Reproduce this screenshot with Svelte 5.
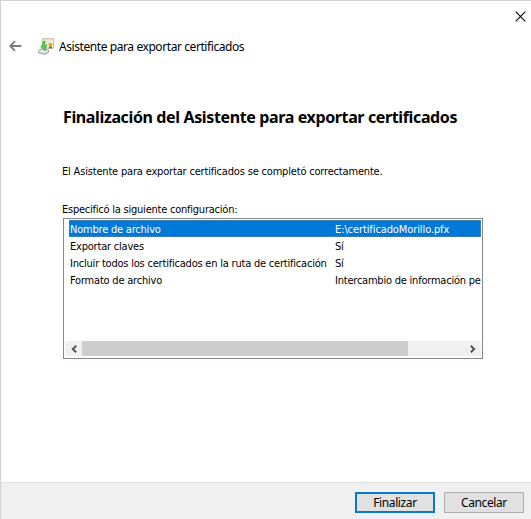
<script>
  const rows = [
    { name: 'Nombre de archivo', value: 'E:\\certificadoMorillo.pfx', selected: true },
    { name: 'Exportar claves', value: 'Sí' },
    { name: 'Incluir todos los certificados en la ruta de certificación', value: 'Sí' },
    { name: 'Formato de archivo', value: 'Intercambio de información pe' }
  ];
</script>

<main class="dialog">
  <div class="titlebar">
    <button class="close" aria-label="Cerrar">
      <svg width="11" height="11" viewBox="0 0 11 11"><path d="M.7.7l9.6 9.6M10.3.7L.7 10.3" stroke="#111" stroke-width="1.2" /></svg>
    </button>
  </div>
  <header>
    <svg class="back" width="13" height="12" viewBox="0 0 13 12"><path d="M12.3 6H1.4M6 1.2L1.2 6L6 10.8" fill="none" stroke="#7b7b7b" stroke-width="1.8" /></svg>
    <svg class="cert" width="17" height="17" viewBox="0 0 17 17">
      <path d="M4.5.8h11.2v9.3H4.5z" fill="#f7f0e5" stroke="#c8b796" />
      <path d="M7 3.2h6M9 5h4" stroke="#dcd4e2" />
      <path d="M11.2 7.5l-.6 3.4 1.8-.8 1.8.8-.5-3.4z" fill="#6869a0" />
      <circle cx="12.5" cy="6.8" r="2.1" fill="#dfaf28" />
      <path d="M.6 12.5l3.6-2 6.2 1.4v2.6l-3.6 1.9-6.2-1.5z" fill="#d5d9d9" stroke="#858b8b" stroke-width=".8" />
      <path d="M.8 12.8l5.8 1.3 3.7-2" fill="none" stroke="#f7f7f7" stroke-width=".8" />
      <path d="M2.6 8.6l1.8-1.1C4.2 5 5 3.7 6.5 2.7l1 1.5C6.7 5.2 6.6 6 6.8 7l2-.4-1.6 6z" fill="#55ca54" stroke="#36a63c" stroke-width=".6" />
    </svg>
    <span class="title">Asistente para exportar certificados</span>
  </header>
  <section>
    <h1>Finalización del Asistente para exportar certificados</h1>
    <p class="done">El Asistente para exportar certificados se completó correctamente.</p>
    <p class="label">Especificó la siguiente configuración:</p>
    <div class="list">
      <div class="rows">
        {#each rows as row}
          <div class="row" class:selected={row.selected}>
            <span class="name">{row.name}</span>
            <span class="value">{row.value}</span>
          </div>
        {/each}
      </div>
      <div class="scrollbar">
        <span class="arrow"><svg width="6" height="8" viewBox="0 0 6 8"><path d="M5.2.8L1.8 4l3.4 3.2" fill="none" stroke="#505050" stroke-width="1.9" /></svg></span>
        <div class="track"><div class="thumb"></div></div>
        <span class="arrow"><svg width="6" height="8" viewBox="0 0 6 8"><path d="M.8.8L4.2 4L.8 7.2" fill="none" stroke="#505050" stroke-width="1.9" /></svg></span>
      </div>
    </div>
  </section>
  <footer>
    <button class="btn primary">Finalizar</button>
    <button class="btn">Cancelar</button>
  </footer>
</main>

<style>
  :global(body) { background: #fff; overflow: hidden; }
  .dialog {
    width: 531px; height: 519px; box-sizing: border-box; overflow: hidden;
    display: flex; flex-direction: column; background: #fff; color: #000;
    border-top: 1px solid #d2d2d2; border-left: 1px solid #d2d2d2;
    font-family: "DejaVu Sans Condensed", "DejaVu Sans", sans-serif;
    font-stretch: condensed; font-size: 11px;
  }
  button { padding: 0; font: inherit; color: inherit; }
  svg { display: block; flex: none; }
  .titlebar { height: 30px; flex: none; display: flex; justify-content: flex-end; padding: 10px 5px 0 0; box-sizing: border-box; }
  .close { width: 11px; height: 11px; border: 0; background: none; }
  header { height: 30px; flex: none; display: flex; align-items: center; padding-left: 8px; font-family: "Noto Sans", sans-serif; font-stretch: normal; font-size: 12px; }
  .cert { margin-left: 16px; }
  .title { margin-left: 4px; letter-spacing: -0.42px; padding-top: 1px; white-space: nowrap; }
  section { flex: 1; padding: 0 48px 0 61px; }
  h1 { margin: 45px 0 0 1px; font: bold 16px/22px "Noto Sans", sans-serif; letter-spacing: -0.37px; white-space: nowrap; }
  p { margin: 0; line-height: 16px; white-space: nowrap; }
  .done { margin-top: 36px; letter-spacing: -0.18px; }
  .label { margin-top: 22px; letter-spacing: -0.23px; }
  .list { height: 141px; margin-left: 1px; box-sizing: border-box; border: 1px solid #828790; padding: 1px; display: flex; flex-direction: column; justify-content: space-between; }
  .rows { padding-left: 4px; }
  .row { height: 17px; line-height: 19px; display: flex; white-space: nowrap; letter-spacing: -0.21px; padding-left: 1px; }
  .selected { background: #0078d7; color: #fff; outline: 1px dotted #4c8fbd; outline-offset: -1px; }
  .name { width: 265px; flex: none; }
  .value { letter-spacing: -0.22px; }
  .selected .value { letter-spacing: -0.1px; }
  .scrollbar { height: 15px; margin: 0 0 1px; display: flex; background: #f0f0f0; }
  .arrow { width: 17px; display: flex; align-items: center; justify-content: center; }
  .track { flex: 1; }
  .thumb { width: 326px; height: 15px; background: #cdcdcd; }
  footer { height: 37px; flex: none; box-sizing: border-box; border-top: 1px solid #dfdfdf; background: #f0f0f0; display: flex; justify-content: flex-end; gap: 9px; padding: 9px 7px 0 0; }
  .btn { width: 80px; height: 21px; box-sizing: border-box; border: 1px solid #adadad; background: #e1e1e1; font: 12px/17px "Noto Sans", sans-serif; letter-spacing: -0.4px; }
  .primary { border: 2px solid #0b78ce; }
</style>
